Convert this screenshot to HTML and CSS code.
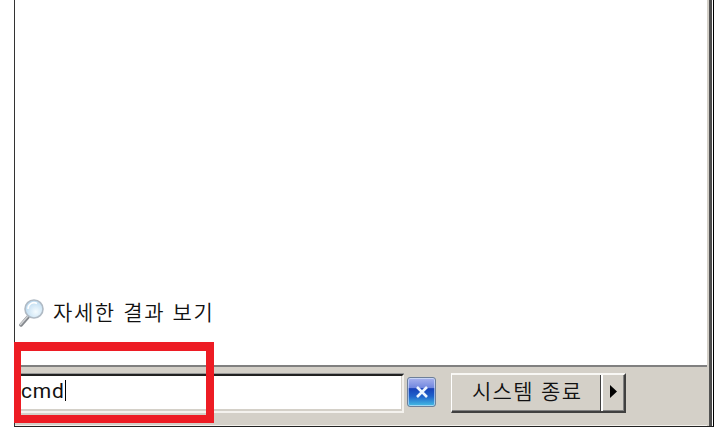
FILE: index.html
```
<!DOCTYPE html>
<html lang="ko">
<head>
    <meta charset="UTF-8">
    <title>시작 메뉴 검색</title>
    <link rel="stylesheet" href="styles.css">
</head>
<body>
    <div class="start-menu">
        <div class="menu-body">
            <div class="results">
                <a class="more-results">
                    <svg class="search-icon" width="26" height="29" viewBox="0 0 26 29">
                        <defs>
                            <radialGradient id="lens" cx="60%" cy="65%" r="65%">
                                <stop offset="0" stop-color="#f5fcff"/>
                                <stop offset="1" stop-color="#b9d9f0"/>
                            </radialGradient>
                        </defs>
                        <path d="M9 18L2 26" stroke="#85898e" stroke-width="3.500" stroke-linecap="round"/>
                        <path d="M8.500 17.500L1.500 25.500" stroke="#d0d2d4" stroke-width="1.500" stroke-linecap="round"/>
                        <circle cx="15" cy="10" r="9" fill="url(#lens)" stroke="#b0bac4" stroke-width="1.600"/>
                        <path d="M9 10a6 6 0 0 1 9-5.500" fill="none" stroke="#fff" stroke-width="1.500"/>
                    </svg>
                    <span class="more-text">자세한 결과 보기</span>
                </a>
            </div>
            <div class="toolbar">
                <div class="search-box"><span class="query">cmd</span><span class="caret"></span></div>
                <div class="clear-btn">
                    <svg width="14" height="12" viewBox="0 0 14 12">
                        <path d="M2 1L12 11M12 1L2 11" stroke="#eef6ff" stroke-width="2.600"/>
                    </svg>
                </div>
                <div class="shutdown">
                    <div class="shutdown-label"><span>시스템 종료</span></div>
                    <div class="shutdown-more">
                        <svg width="7" height="13" viewBox="0 0 7 13"><path d="M0 0L7 6.500L0 13Z" fill="#000"/></svg>
                    </div>
                </div>
            </div>
        </div>
        <div class="menu-edge"></div>
        <div class="highlight"></div>
    </div>
</body>
</html>
```

FILE: styles.css
```
:root {
    --face: #d4d0c8;
    --shadow: #808080;
    --dark: #404040;
    --red: #ed1c24;
}

* {
    margin: 0;
    padding: 0;
    box-sizing: border-box;
}

body {
    background: #fff;
    color: #111;
    font-family: 'Noto Sans CJK KR', sans-serif;
    overflow: hidden;
}

.start-menu {
    position: relative;
    display: flex;
    width: 700px;
    height: 427px;
    margin-left: 14px;
    border-left: 1px solid #333;
    border-right: 1px solid #000;
    border-bottom: 1px solid #222;
}

.menu-body {
    flex: 1;
    display: flex;
    flex-direction: column;
}

.menu-edge {
    width: 6px;
    background: linear-gradient(90deg, #d4d0c8 2px, #555 2px, #484848 5px, #fff 5px);
}

.results {
    flex: 1;
    display: flex;
    align-items: flex-end;
    padding: 0 0 37px 4px;
}

.more-results {
    display: flex;
    align-items: center;
    gap: 8px;
    height: 29px;
}

.more-text {
    padding-bottom: 5px;
    font-size: 21px;
    font-weight: 350;
    line-height: 29px;
    letter-spacing: 1.6px;
    white-space: nowrap;
}

.toolbar {
    display: flex;
    align-items: flex-start;
    height: 61px;
    padding-top: 7px;
    background: var(--face);
    border-top: 2px solid var(--shadow);
    border-bottom: 1px solid #f3f1ec;
}

.search-box {
    display: flex;
    align-items: center;
    width: 389px;
    height: 39px;
    padding: 0 0 6px 6px;
    background: #fff;
    border-top: 2px solid #222;
    border-right: 2px solid #f4f2ee;
    border-bottom: 2px solid #f4f2ee;
    box-shadow: inset -1px -2px 0 #d4d0c8, 0 -1px 0 #999;
}

.query {
    font-family: 'Roboto', sans-serif;
    font-size: 21px;
    font-weight: 400;
    letter-spacing: 0.8px;
}

.caret {
    width: 1px;
    height: 21px;
    background: #000;
}

.clear-btn {
    display: flex;
    align-items: center;
    justify-content: center;
    width: 29px;
    height: 30px;
    margin: 3px 0 0 3px;
    border: 1px solid #6d7f99;
    border-radius: 3px;
    background: linear-gradient(#a9b3ed 0, #7187df 35%, #1741b8 38%, #1f62cb 65%, #45bde4 100%);
    box-shadow: inset 0 0 0 1px rgba(220, 235, 255, 0.6);
}

.shutdown {
    display: flex;
    width: 175px;
    height: 40px;
    margin: -1px 0 0 15px;
    border-top: 2px solid #f8f7f4;
    border-left: 1px solid #fff;
    border-right: 2px solid var(--dark);
    border-bottom: 2px solid var(--dark);
    box-shadow: inset -1px -1px 0 var(--shadow);
}

.shutdown-label {
    flex: 1;
    display: flex;
    align-items: center;
    padding: 0 0 6px 20px;
    border-right: 1px solid var(--dark);
    font-size: 21px;
    font-weight: 350;
    line-height: 30px;
    letter-spacing: 1.3px;
    white-space: nowrap;
}

.shutdown-more {
    display: flex;
    align-items: center;
    width: 23px;
    padding: 0 0 3px 7px;
    border-left: 2px solid #fff;
}

/* red frame over the search field */
.highlight {
    position: absolute;
    left: -1px;
    top: 342px;
    width: 200px;
    height: 81px;
    border: 8px solid var(--red);
    border-top-width: 9px;
    border-left-width: 7px;
}
```
